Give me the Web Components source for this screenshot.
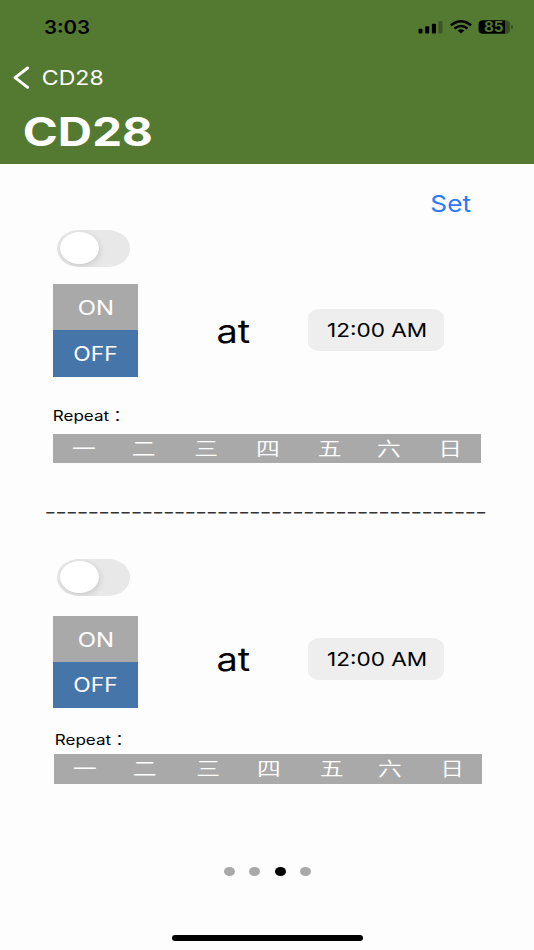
<!DOCTYPE html>
<html lang="zh-Hant">
<head>
<meta charset="utf-8">
<meta name="viewport" content="width=device-width">
<title>CD28</title>
<style>
html,body{margin:0;height:100%;background:#fdfdfd}
body{font-family:Inter,"Noto Sans CJK TC",sans-serif;color:#000;overflow:hidden}
</style>
</head>
<body>
<timer-screen></timer-screen>
<script>
const FONT = 'Inter,"Noto Sans CJK TC",sans-serif';
const pen = document.createElement('canvas').getContext('2d');

function define(name, html, ready) {
  const t = document.createElement('template');
  t.innerHTML = html;
  customElements.define(name, class extends HTMLElement {
    connectedCallback() {
      if (this.shadowRoot) return;
      this.attachShadow({mode: 'open'}).append(t.content.cloneNode(true));
      if (ready) ready(this, this.shadowRoot);
    }
  });
}

// One line of wide text: the glyphs fill the box from edge to edge.
define('wide-text', `<style>
:host{display:block;flex:none;height:1em;line-height:1em;white-space:nowrap}
span{display:inline-block;transform-origin:0 50%;vertical-align:top;line-height:1em}
</style><span></span>`, (el, root) => {
  const size = +el.getAttribute('size'), weight = el.getAttribute('weight') || 400;
  const width = +el.getAttribute('width'), text = el.getAttribute('text');
  const dx = +el.getAttribute('dx') || 0, dy = +el.getAttribute('dy') || 0;
  const spacing = (el.getAttribute('spacing') || 0) + 'px';
  const s = root.querySelector('span');
  s.textContent = text;
  s.style.letterSpacing = spacing;
  el.style.fontSize = size + 'px';
  el.style.fontWeight = weight;
  el.style.width = width + 'px';
  pen.font = `${weight} ${size}px ${FONT}`;
  pen.letterSpacing = spacing;
  const m = pen.measureText(text);
  const k = width / (m.actualBoundingBoxRight + m.actualBoundingBoxLeft);
  s.style.transform = `translate(${m.actualBoundingBoxLeft * k + dx}px,${dy}px) scaleX(${k})`;
});

define('status-bar', `<style>
:host{display:flex;height:54px;box-sizing:border-box;padding:0 21px 0 44px;align-items:center;justify-content:space-between}
div{display:flex;align-items:center}
svg{display:block;flex:none}
.level{position:relative;width:35px;height:14px;margin-left:5px}
.level wide-text{position:absolute;left:6px;top:0;color:#547a32}
</style>
<wide-text text="3:03" size="18" weight="600" width="45.6" dy="1"></wide-text>
<div>
<svg width="60" height="14" viewBox="0 0 60 14" fill="#000">
<rect x="5.5" y="8.8" width="4" height="4.6" rx="1"/><rect x="12.2" y="6.3" width="4" height="7.1" rx="1"/><rect x="18.9" y="3.7" width="4" height="9.7" rx="1"/><rect x="25.5" y="1" width="4" height="12.4" rx="1" opacity=".3"/>
<g fill="none" stroke="#000" stroke-width="2.5"><path d="M37.9 5.3Q48 -2.9 58.1 5.3"/><path d="M41.5 8.6Q48 3.4 54.5 8.6"/></g><path d="M44.6 10.4Q48 7.9 51.4 10.4L48 13.5Z"/></svg>
<div class="level"><svg width="35" height="14" viewBox="0 0 35 14"><path d="M5 .2H27V13.8H5Q.6 13.8 .6 10V4Q.6 .2 5 .2Z"/><path d="M27 .2H28Q32 .2 32 4V10Q32 13.8 28 13.8H27Z" opacity=".35"/><path d="M33.2 4.7Q35 5.2 35 7T33.2 9.3Z" opacity=".4"/></svg>
<wide-text text="85" size="14" weight="700" width="19.6"></wide-text></div>
</div>`);

define('nav-header', `<style>
:host{display:block;height:164px;box-sizing:border-box;background:#547a32;color:#fff}
.bar{color:#000}
.back{display:flex;align-items:center;height:47px;padding-left:13px;gap:13px}
.title{padding:10.5px 0 0 24px}
svg{display:block}
</style><status-bar class="bar"></status-bar>
<div class="back"><svg width="17" height="24" viewBox="0 0 17 24" fill="none" stroke="#fff" stroke-width="2.9" stroke-linecap="round" stroke-linejoin="round"><path d="M14.6 2L2.1 11.7L14.6 21.3"/></svg>
<wide-text text="CD28" size="19.8" width="60.4" dy=".8"></wide-text></div>
<div class="title"><wide-text text="CD28" size="39" weight="700" width="127.2"></wide-text></div>`);

define('toggle-switch', `<style>
:host{display:block;width:73px;height:36.5px;box-sizing:border-box;padding:2.3px 3px;border-radius:22px/18.25px;background:#e8e8e8;overflow:hidden}
i{display:block;width:39px;height:32px;border-radius:50%;background:#fff;box-shadow:1px 2px 6px #0002}
</style><i></i>`);

define('on-off', `<style>
:host{display:grid;grid-template-rows:1fr 1fr;width:85.3px;color:#fff}
div{display:grid;place-items:center;background:#a9a9a9}
.off{background:#4675a9}
</style><div><wide-text text="ON" size="19.5" width="33" dy="1.1"></wide-text></div>
<div class="off"><wide-text text="OFF" size="19.5" width="42.6" dx=".5" dy=".8"></wide-text></div>`);

define('time-pill', `<style>
:host{display:grid;place-items:center;width:136.5px;height:42px;border-radius:11px/9px;background:#eee}
</style><wide-text text="12:00 AM" size="18.8" width="99" dy=".7"></wide-text>`);

define('week-days', `<style>
:host{display:grid;grid-template-columns:62px 57.4px 68.2px 53.8px 71.2px 45.8px 78.2px;width:436.6px;height:29.3px;align-items:center;color:#fff;
background:linear-gradient(#a9a9a9,#a9a9a9) 0 0/428.3px 100% no-repeat;font:350 19.5px/29px "Noto Sans CJK TC",sans-serif}
span{display:block;text-align:center;transform:translateY(-1.4px) scaleX(1.22)}
</style>`, (el, root) => {
  for (const d of '一二三四五六日') {
    const s = document.createElement('span');
    s.textContent = d;
    root.append(s);
  }
});

define('alarm-block', `<style>
:host{display:block}
toggle-switch{margin-left:57px}
.row{display:flex;align-items:center;margin:var(--row-gap) 0 0 53px}
on-off{height:var(--choice)}
.at{margin:0 57.5px 0 79.2px}
.at,time-pill{position:relative;top:var(--lift)}
.repeat{margin:var(--label-gap) 0 0 calc(var(--indent) + var(--label-shift,0px))}
week-days{margin:var(--bar-gap) 0 0 var(--indent)}
</style><toggle-switch></toggle-switch>
<div class="row"><on-off></on-off><wide-text class="at" text="at" size="33" width="32.8" dx=".7" dy=".6"></wide-text><time-pill></time-pill></div>
<wide-text class="repeat" text="Repeat：" size="14" width="66" dx="1" dy=".3"></wide-text>
<week-days></week-days>`);

define('page-dots', `<style>
:host{display:flex;justify-content:center;gap:14.2px}
i{width:11px;height:9px;border-radius:50%;background:#a9a9a9}
.on{background:#000}
</style><i></i><i></i><i class="on"></i><i></i>`);

define('timer-screen', `<style>
:host{display:flex;flex-direction:column;width:534px;height:950px;overflow:hidden;background:#fdfdfd}
.set{display:flex;justify-content:flex-end;padding:28px 63px 0 0;color:#2c7af5}
.first{margin-top:15px;--row-gap:17.8px;--choice:92.4px;--lift:-.4px;--label-gap:32px;--bar-gap:11.2px;--indent:53px}
.line{margin:40.5px 0 0 46px;color:#333}
.second{margin-top:38.4px;--row-gap:20.8px;--choice:91.7px;--lift:-3.3px;--label-gap:25px;--bar-gap:7.3px;--indent:54.3px;--label-shift:.6px}
page-dots{margin-top:83.4px;padding-left:1px}
.home{width:190.5px;height:6px;border-radius:3px;background:#000;margin:58.5px 0 0 172px}
</style><nav-header></nav-header>
<div class="set"><wide-text text="Set" size="23" width="40" dx=".5" dy=".6"></wide-text></div>
<alarm-block class="first"></alarm-block>
<wide-text class="line" text="-----------------------------------------" size="17" spacing="-.6" width="439.6"></wide-text>
<alarm-block class="second"></alarm-block>
<page-dots></page-dots>
<div class="home"></div>`);
</script>
</body>
</html>
